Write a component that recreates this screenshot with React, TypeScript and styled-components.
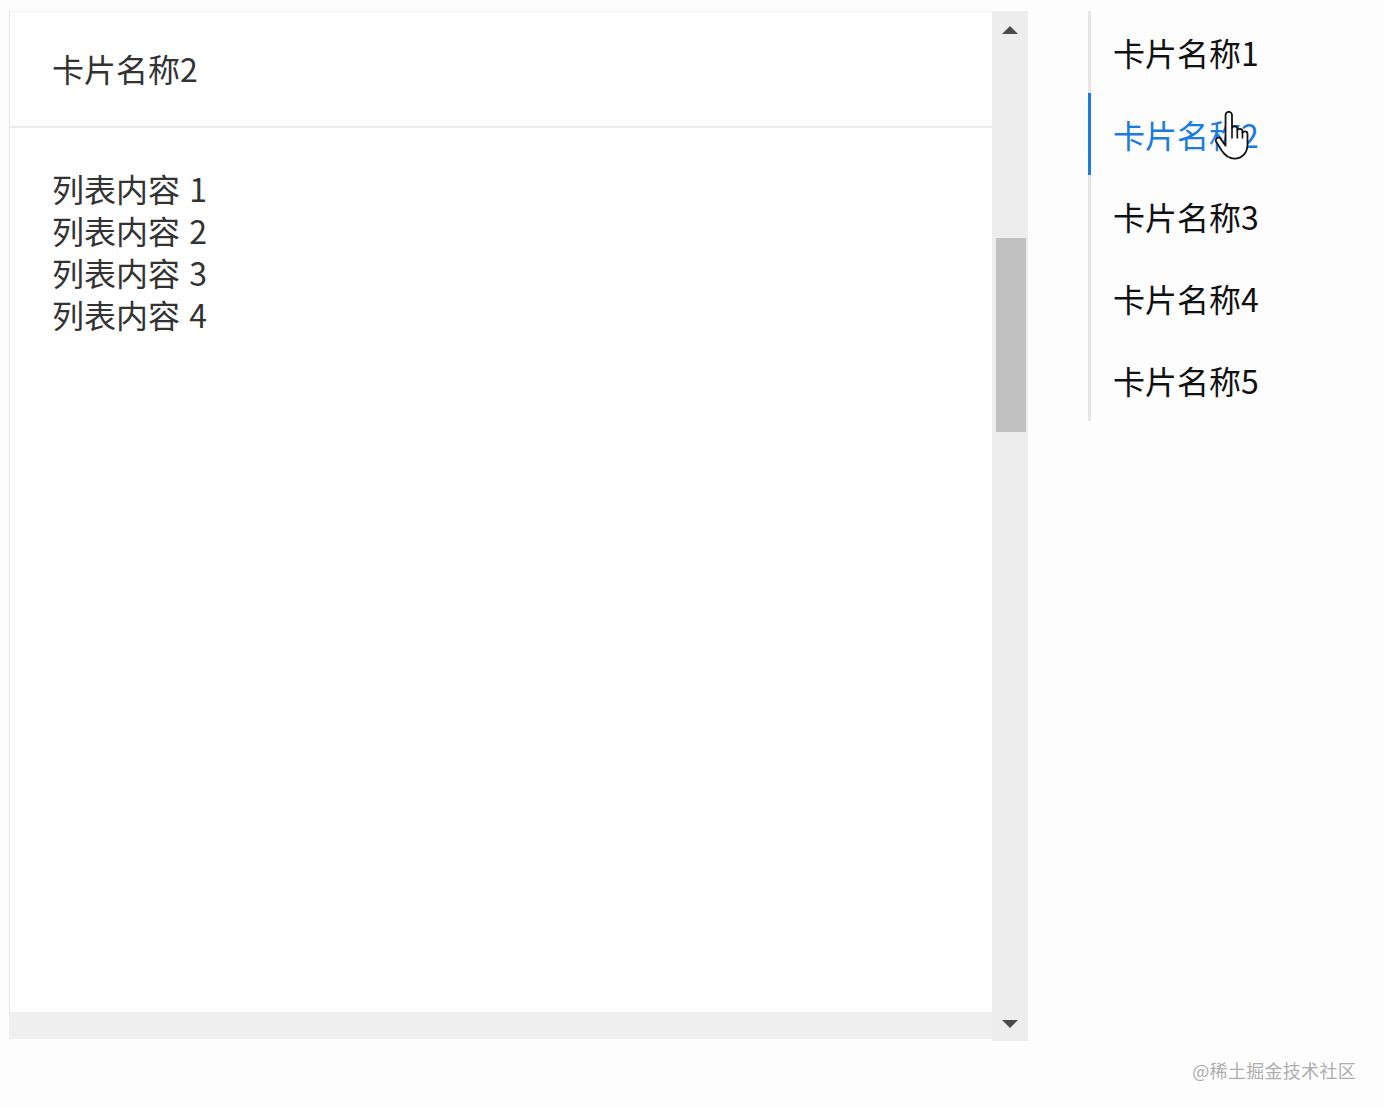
import { useState } from "react";
import styled, { createGlobalStyle } from "styled-components";

const GlobalStyle = createGlobalStyle`
  html, body {
    margin: 0;
    padding: 0;
    background: #fdfdfd;
    font-family: "Noto Sans CJK SC", "Noto Sans", sans-serif;
  }
`;

const Page = styled.div`
  position: relative;
  display: flex;
  align-items: flex-start;
  width: 1384px;
  height: 1108px;
  padding: 11px 0 0 9px;
  box-sizing: border-box;
`;

const ScrollBox = styled.div`
  display: grid;
  grid-template-columns: 983px 36px;
  grid-template-rows: 1001px 29px;
  width: 1019px;
  height: 1030px;
`;

const Card = styled.div`
  grid-column: 1;
  grid-row: 1;
  display: flex;
  flex-direction: column;
  background: #ffffff;
  border-left: 1px solid #e4e4e4;
  border-top: 1px solid #f3f3f3;
  box-sizing: border-box;
`;

const CardHeader = styled.div`
  display: flex;
  align-items: center;
  height: 116px;
  padding: 0 0 2px 42px;
  box-sizing: border-box;
  border-bottom: 2px solid #ececec;
  font-size: 32px;
  color: #333333;
`;

const CardBody = styled.ul`
  margin: 0;
  padding: 39px 0 0 42px;
  list-style: none;
`;

const ListItem = styled.li`
  font-size: 32px;
  line-height: 42px;
  color: #333333;
  word-spacing: 2px;
`;

const VBar = styled.div`
  grid-column: 2;
  grid-row: 1 / span 2;
  display: flex;
  flex-direction: column;
  align-items: center;
  background: #ededed;
`;

const ArrowBtn = styled.div<{ $down?: boolean }>`
  display: flex;
  align-items: center;
  justify-content: center;
  width: 100%;
  height: 38px;
  ${(p) => (p.$down ? "padding-top: 4px;" : "")}
  box-sizing: border-box;

  &::after {
    content: "";
    width: 0;
    height: 0;
    border-left: 8px solid transparent;
    border-right: 8px solid transparent;
    ${(p) =>
      p.$down
        ? "border-top: 8px solid #4a4a4a;"
        : "border-bottom: 8px solid #4a4a4a;"}
  }
`;

const Track = styled.div`
  flex: 1;
  width: 100%;
  display: flex;
  justify-content: center;
  padding-left: 2px;
  box-sizing: border-box;
`;

const Thumb = styled.div`
  width: 30px;
  height: 194px;
  background: #c1c1c1;
`;

const HBar = styled.div`
  grid-column: 1;
  grid-row: 2;
  background: #efefef;
  margin-bottom: 2px;
`;

const Nav = styled.nav`
  margin-left: 60px;
  display: flex;
  flex-direction: column;
  border-left: 3px solid #e6e6e6;
`;

const NavItem = styled.div<{ $active?: boolean }>`
  display: flex;
  align-items: center;
  height: 82px;
  padding-left: 22px;
  margin-left: -3px;
  border-left: 3px solid ${(p) => (p.$active ? "#1a7be0" : "transparent")};
  font-size: 32px;
  color: ${(p) => (p.$active ? "#1a7be0" : "#111111")};
  cursor: pointer;
`;

const Cursor = styled.svg`
  position: absolute;
  left: 1213px;
  top: 111px;
  width: 38px;
  height: 50px;
`;

const Watermark = styled.div`
  position: absolute;
  right: 28px;
  top: 1057px;
  font-size: 18px;
  color: #aeaeae;
  letter-spacing: 0.3px;
`;

const cards = ["卡片名称1", "卡片名称2", "卡片名称3", "卡片名称4", "卡片名称5"];
const items = ["列表内容 1", "列表内容 2", "列表内容 3", "列表内容 4"];

export default function App() {
  const [active, setActive] = useState(1);
  const thumbTop = 189;

  return (
    <>
      <GlobalStyle />
      <Page>
        <ScrollBox>
          <Card>
            <CardHeader>{cards[active]}</CardHeader>
            <CardBody>
              {items.map((t) => (
                <ListItem key={t}>{t}</ListItem>
              ))}
            </CardBody>
          </Card>
          <VBar>
            <ArrowBtn />
            <Track>
              <Thumb style={{ marginTop: thumbTop }} />
            </Track>
            <ArrowBtn $down />
          </VBar>
          <HBar />
        </ScrollBox>
        <Nav>
          {cards.map((c, i) => (
            <NavItem key={c} $active={i === active} onClick={() => setActive(i)}>
              {c}
            </NavItem>
          ))}
        </Nav>
        <Cursor viewBox="0 0 22 31">
          <path
            d="M7 2.5C7 1.4 7.9.5 9 .5s2 .9 2 2V10.5c.3-.6.9-1 1.6-1 1 0 1.7.7 1.7 1.7v.8c.3-.6.9-.9 1.6-.9.9 0 1.6.7 1.6 1.6v.8c.3-.5.8-.8 1.5-.8.9 0 1.6.7 1.6 1.6V21c0 4.8-3.2 8.5-8 8.5-4 0-6-2-8-5L1.2 19.1c-.5-.8-.3-1.8.5-2.3.8-.5 1.8-.3 2.3.5L7 21.5Z"
            fill="#fff"
            stroke="#111"
            strokeWidth="1.1"
            strokeLinejoin="round"
          />
          <path d="M11 10.5V17M14.3 12V17M17.5 13V17" stroke="#111" strokeWidth="1" fill="none" />
        </Cursor>
        <Watermark>@稀土掘金技术社区</Watermark>
      </Page>
    </>
  );
}
